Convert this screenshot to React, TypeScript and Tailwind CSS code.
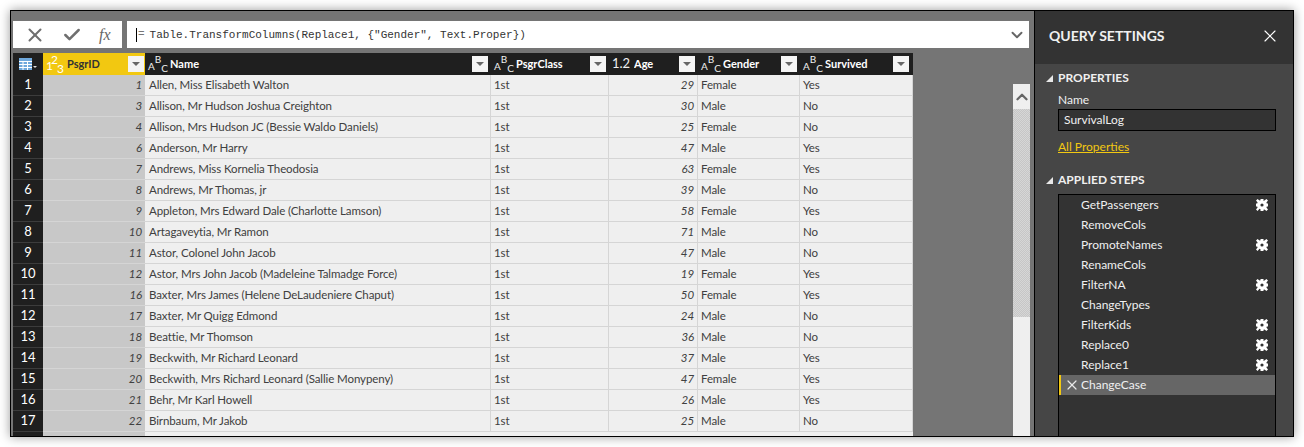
import React from 'react';
import { X, Check, ChevronDown, ChevronUp } from 'lucide-react';

const rows = [
  [1, 'Allen, Miss Elisabeth Walton', 29, 'Female', 'Yes'],
  [3, 'Allison, Mr Hudson Joshua Creighton', 30, 'Male', 'No'],
  [4, 'Allison, Mrs Hudson JC (Bessie Waldo Daniels)', 25, 'Female', 'No'],
  [6, 'Anderson, Mr Harry', 47, 'Male', 'Yes'],
  [7, 'Andrews, Miss Kornelia Theodosia', 63, 'Female', 'Yes'],
  [8, 'Andrews, Mr Thomas, jr', 39, 'Male', 'No'],
  [9, 'Appleton, Mrs Edward Dale (Charlotte Lamson)', 58, 'Female', 'Yes'],
  [10, 'Artagaveytia, Mr Ramon', 71, 'Male', 'No'],
  [11, 'Astor, Colonel John Jacob', 47, 'Male', 'No'],
  [12, 'Astor, Mrs John Jacob (Madeleine Talmadge Force)', 19, 'Female', 'Yes'],
  [16, 'Baxter, Mrs James (Helene DeLaudeniere Chaput)', 50, 'Female', 'Yes'],
  [17, 'Baxter, Mr Quigg Edmond', 24, 'Male', 'No'],
  [18, 'Beattie, Mr Thomson', 36, 'Male', 'No'],
  [19, 'Beckwith, Mr Richard Leonard', 37, 'Male', 'Yes'],
  [20, 'Beckwith, Mrs Richard Leonard (Sallie Monypeny)', 47, 'Female', 'Yes'],
  [21, 'Behr, Mr Karl Howell', 26, 'Male', 'Yes'],
  [22, 'Birnbaum, Mr Jakob', 25, 'Male', 'No'],
];

const steps = [
  ['GetPassengers', true],
  ['RemoveCols', false],
  ['PromoteNames', true],
  ['RenameCols', false],
  ['FilterNA', true],
  ['ChangeTypes', false],
  ['FilterKids', true],
  ['Replace0', true],
  ['Replace1', true],
];

const FilterButton = () => (
  <div className="w-[16px] h-[16px] bg-[#f4f4f4] flex items-center justify-center shrink-0">
    <svg width="8" height="4" viewBox="0 0 8 4">
      <path d="M0 0h8L4 4z" fill="#666" />
    </svg>
  </div>
);

const Gear = () => (
  <svg width="12" height="12" viewBox="0 0 12 12" className="shrink-0">
    <path
      fillRule="evenodd"
      fill="#fff"
      d="M4.5 0h3v2l1-.4L10.4 0l1.6 1.6-1.6 1.9.4 1h1.8v3h-1.8l-.4 1 1.6 1.9-1.6 1.6-1.9-1.6-1 .4V12h-3v-1.8l-1-.4L1.6 12 0 10.4l1.6-1.9-.4-1H0v-3h1.2l.4-1L0 1.6 1.6 0l1.9 1.6 1-.4zM6 4.4a1.6 1.6 0 1 0 0 3.2 1.6 1.6 0 0 0 0-3.2z"
    />
  </svg>
);

const AbcIcon = () => (
  <div className="w-[18px] h-[18px] flex text-[#f0f0f0] text-[10px] font-normal leading-[9px] shrink-0">
    <span className="self-center translate-y-[2px]">A</span>
    <span className="self-start">B</span>
    <span className="self-end">C</span>
  </div>
);

const IntIcon = () => (
  <div className="w-[18px] h-[18px] flex text-white text-[12px] font-normal leading-[9px] shrink-0">
    <span className="self-center translate-y-[1px] w-[6px] pl-[1px]">1</span>
    <span className="self-start w-[6px]">2</span>
    <span className="self-end">3</span>
  </div>
);

const HeaderCell = ({ width, icon, label, gap = 'pl-[3px]', end = 'pr-[3px]', active = false }: { width: string; icon: React.ReactNode; label: string; gap?: string; end?: string; active?: boolean }) => (
  <div className={`${width} ${active ? 'bg-[#f2c811] text-[#333]' : 'text-white'} ${gap} ${end} flex items-center shrink-0 font-bold text-[11px]`}>
    {icon}
    <span className="flex-1 ml-[4px] truncate">{label}</span>
    <FilterButton />
  </div>
);

const Triangle = () => (
  <svg width="7" height="7" viewBox="0 0 7 7" className="shrink-0">
    <path d="M7 0v7H0z" fill="#e8e8e8" />
  </svg>
);

export default function App() {
  return (
    <div className="w-[1304px] h-[447px] bg-white p-[10px] overflow-hidden font-['Lato',sans-serif]">
      <div className="w-[1284px] h-[427px] border border-black flex shadow-[0_0_10px_rgba(0,0,0,0.4)]">
        {/* Editor side */}
        <div className="w-[1023px] shrink-0 bg-[#757575] flex flex-col pl-[2px] pt-[10px] overflow-hidden">
          <div className="flex gap-[5px] h-[27px] shrink-0">
            <div className="w-[109px] bg-white flex items-center pl-[11px]">
              <X size={22} strokeWidth={2.2} className="text-[#6f6f6f]" />
              <Check size={20} strokeWidth={3} className="text-[#6f6f6f] ml-[16px]" />
              <span className="ml-[17px] font-['Liberation_Serif',serif] italic text-[#666] text-[16px]">fx</span>
            </div>
            <div className="w-[902px] bg-white flex items-center pl-[9px] pr-[3px]">
              <span className="w-px h-[14px] bg-black mr-[1px]" />
              <span className="text-[#777] font-['Liberation_Mono',monospace] text-[11px]">=</span>
              <span className="ml-[5px] flex-1 font-['Liberation_Mono',monospace] text-[11px] text-[#333] whitespace-pre translate-y-[1px]">{'Table.TransformColumns(Replace1, {"Gender", Text.Proper})'}</span>
              <ChevronDown size={18} strokeWidth={2.5} className="text-[#666]" />
            </div>
          </div>

          <div className="flex flex-1 min-h-0 mt-[5px]">
            <div className="w-[900px] shrink-0 flex flex-col text-[11.5px] tracking-[-0.1px] text-[#404040]">
              <div className="flex h-[22px] bg-[#1f1f1f] shrink-0 tracking-normal">
                <div className="w-[30px] flex items-center justify-center gap-[1px] shrink-0">
                  <svg width="18" height="12" viewBox="0 0 18 12">
                    <path d="M0 0h13v12H0z" fill="#6fa8dc" />
                    <path d="M0 3.5h13M0 6.5h13M0 9.5h13M4 3v9M8.5 3v9" stroke="#fff" strokeWidth="1" />
                    <path d="M14 8h4l-2 2z" fill="#ddd" />
                  </svg>
                </div>
                <HeaderCell width="w-[102px]" active gap="pl-[2px]" end="pr-[1px]" icon={<IntIcon />} label="PsgrID" />
                <HeaderCell width="w-[346px]" icon={<AbcIcon />} label="Name" />
                <HeaderCell width="w-[118px]" icon={<AbcIcon />} label="PsgrClass" />
                <HeaderCell width="w-[89px]" icon={<span className="w-[18px] text-[13px] font-normal text-[#f0f0f0] shrink-0">1.2</span>} label="Age" />
                <HeaderCell width="w-[102px]" icon={<AbcIcon />} label="Gender" />
                <HeaderCell width="w-[113px]" end="pr-[4px]" icon={<AbcIcon />} label="Survived" />
              </div>
              {rows.map((row, i) => (
                <div key={i} className="flex h-[21px] shrink-0">
                  <div className="w-[30px] bg-[#1f1f1f] border-b border-[#3c3c3c] text-white text-[13px] flex items-center justify-center shrink-0">{i + 1}</div>
                  <div className="w-[102px] bg-[#c8c8c8] border-b border-[#d5d5d5] italic pr-[3px] flex items-center justify-end shrink-0">{row[0]}</div>
                  <div className="w-[346px] bg-[#efefef] border-b border-r border-[#d5d5d5] pl-[4px] flex items-center shrink-0 whitespace-nowrap">{row[1]}</div>
                  <div className="w-[118px] bg-[#efefef] border-b border-r border-[#d5d5d5] pl-[3px] flex items-center shrink-0">1st</div>
                  <div className="w-[89px] bg-[#efefef] border-b border-r border-[#d5d5d5] italic pr-[3px] flex items-center justify-end shrink-0">{row[2]}</div>
                  <div className="w-[102px] bg-[#efefef] border-b border-r border-[#d5d5d5] pl-[3px] flex items-center shrink-0">{row[3]}</div>
                  <div className="w-[113px] bg-[#efefef] border-b border-r border-[#d5d5d5] pl-[3px] flex items-center shrink-0">{row[4]}</div>
                </div>
              ))}
              <div className="flex h-[21px] shrink-0">
                <div className="w-[30px] bg-[#1f1f1f] shrink-0" />
                <div className="w-[102px] bg-[#c8c8c8] shrink-0" />
                <div className="w-[768px] bg-[#efefef] shrink-0" />
              </div>
            </div>

            <div className="w-[17px] shrink-0 ml-[100px] mt-[31px] bg-[#efefef] flex flex-col items-center">
              <ChevronUp size={18} strokeWidth={3} className="text-[#666] mt-[4px] mb-[3px] shrink-0" />
              <div className="w-full h-[208px] bg-[repeating-conic-gradient(#c6c6c6_0_25%,#d6d6d6_0_50%)] bg-[length:2px_2px]" />
            </div>
          </div>
        </div>

        {/* Query settings */}
        <div className="flex-1 border-l border-black bg-[#464646] flex flex-col text-[#f0f0f0] text-[12px]">
          <div className="h-[53px] bg-[#333333] flex items-start justify-between pt-[15px] pl-[14px] pr-[13px] shrink-0">
            <span className="text-[14px] font-bold leading-[20px]">QUERY SETTINGS</span>
            <X size={20} strokeWidth={1.4} className="text-white" />
          </div>
          <div className="flex items-center gap-[5px] pl-[11px] mt-[6px] h-[16px] font-bold">
            <Triangle />
            <span>PROPERTIES</span>
          </div>
          <div className="ml-[23px] w-[218px] flex flex-col">
            <span className="mt-[5px] h-[17px] leading-[17px]">Name</span>
            <div className="mt-[1px] h-[22px] bg-[#333333] border border-black pl-[5px] flex items-center">SurvivalLog</div>
            <span className="mt-[7px] h-[18px] leading-[18px] text-[#f2c811] underline self-start">All Properties</span>
          </div>
          <div className="flex items-center gap-[5px] pl-[11px] mt-[16px] h-[16px] font-bold">
            <Triangle />
            <span>APPLIED STEPS</span>
          </div>
          <div className="ml-[23px] w-[218px] mt-[6px] flex-1 bg-[#333333] border-x border-t border-black flex flex-col">
            {steps.map(([name, gear]) => (
              <div key={name as string} className="h-[20px] shrink-0 flex items-center justify-between pl-[22px] pr-[7px]">
                <span>{name}</span>
                {gear ? <Gear /> : null}
              </div>
            ))}
            <div className="h-[20px] shrink-0 bg-[#666666] border-l-2 border-[#f2c811] flex items-center pl-[3px]">
              <X size={16} strokeWidth={1.8} className="text-[#e8e8e8] shrink-0" />
              <span className="ml-[1px]">ChangeCase</span>
            </div>
          </div>
        </div>
      </div>
    </div>
  );
}
